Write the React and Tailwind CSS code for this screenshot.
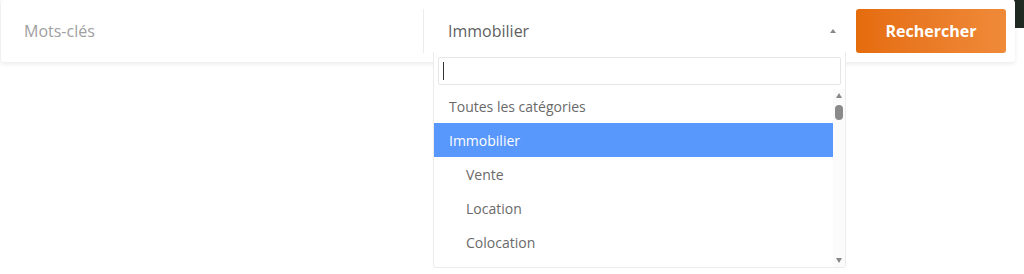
export default function App() {
  return (
    <div className="relative h-[274px] w-[1024px] overflow-hidden bg-white font-['Open_Sans',sans-serif]">
      {/* dark corner from the page behind */}
      <div className="absolute right-0 top-0 h-[28px] w-[10px] bg-[#1f2a22]" />

      {/* Search bar card */}
      <div className="relative flex h-[62px] w-[1015px] items-center rounded-[3px] border-l border-[#f0f0f0] bg-white shadow-[0_2px_4px_rgba(0,0,0,0.08)]">
        {/* Keywords */}
        <div className="flex h-[44px] w-[423px] items-center border-r border-[#ececec] pl-[23px] text-[16px] text-[#a0a0a0]">
          Mots-clés
        </div>

        {/* Category select */}
        <div className="relative flex h-full w-[423px] items-center pl-6 pr-[11px]">
          <span className="text-[16px] text-[#5f5f5f]">Immobilier</span>
          <span className="ml-auto h-0 w-0 border-x-[3.5px] border-b-[4px] border-x-transparent border-b-[#888]" />

          {/* Dropdown */}
          <div className="absolute left-[9px] top-[52px] z-10 flex h-[216px] w-[413px] flex-col rounded-b-[3px] border-x border-b border-[#ececec] bg-white">
            <div className="px-[4px] pt-[5px] pb-[4px]">
              <div className="flex h-[28px] items-center rounded-[2px] border border-[#e6e6e6] pl-[4px]">
                <span className="h-[18px] w-px bg-[#333]" />
              </div>
            </div>
            <div className="flex min-h-0 flex-1">
              <ul className="flex-1 text-[14px] text-[#6a6a6a]">
                <li className="flex h-[34px] items-center pl-[15px]">Toutes les catégories</li>
                <li className="flex h-[34px] items-center bg-[#5897fb] pl-[15px] font-medium text-white">Immobilier</li>
                <li className="flex h-[34px] items-center pl-[32px]">Vente</li>
                <li className="flex h-[34px] items-center pl-[32px]">Location</li>
                <li className="flex h-[34px] items-center pl-[32px]">Colocation</li>
              </ul>
              {/* Scrollbar */}
              <div className="flex w-[12px] flex-col items-center bg-[#fbfbfb] pt-[4px] pb-[4px]">
                <span className="h-0 w-0 border-x-[3.5px] border-b-[5px] border-x-transparent border-b-[#888]" />
                <span className="mt-[7px] h-[15px] w-[8px] rounded-full bg-[#8a8a8a]" />
                <span className="mt-auto h-0 w-0 border-x-[3.5px] border-t-[5px] border-x-transparent border-t-[#888]" />
              </div>
            </div>
          </div>
        </div>

        {/* Submit */}
        <button className="ml-[9px] flex h-[44px] w-[150px] items-center justify-center rounded-[3px] bg-linear-to-r from-[#e56c0b] to-[#ef8a39] text-[16px] font-bold text-white">
          Rechercher
        </button>
      </div>
    </div>
  );
}
